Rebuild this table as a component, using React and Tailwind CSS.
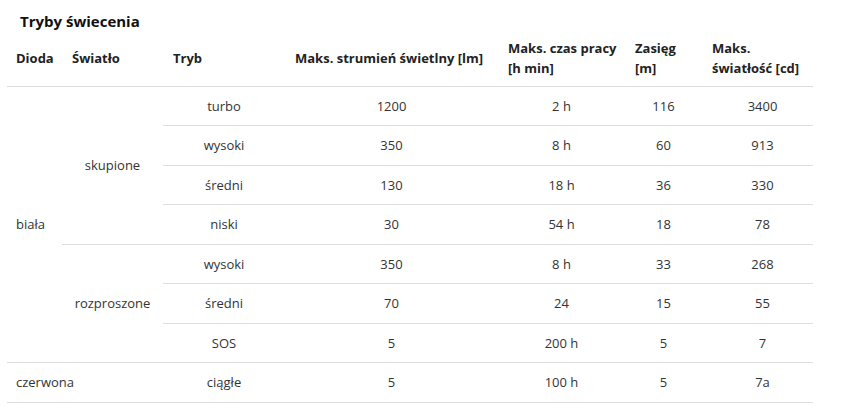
const rows = [
  { tryb: 'turbo', lm: '1200', time: '2 h', range: '116', cd: '3400' },
  { tryb: 'wysoki', lm: '350', time: '8 h', range: '60', cd: '913' },
  { tryb: 'średni', lm: '130', time: '18 h', range: '36', cd: '330' },
  { tryb: 'niski', lm: '30', time: '54 h', range: '18', cd: '78' },
  { tryb: 'wysoki', lm: '350', time: '8 h', range: '33', cd: '268' },
  { tryb: 'średni', lm: '70', time: '24', range: '15', cd: '55' },
  { tryb: 'SOS', lm: '5', time: '200 h', range: '5', cd: '7' },
];

const td = 'border-b border-[#dedede] text-center align-middle px-[10px]';

const App = () => {
  return (
    <div className="bg-white w-[843px] h-[413px] overflow-hidden pl-[7px] text-[#333] font-['Open_Sans',sans-serif]">
      <h2 className="ml-[13px] pt-[11px] text-[15px] leading-[20px] font-bold text-[#111]">
        Tryby świecenia
      </h2>

      <table className="border-collapse table-fixed w-[806px] text-[13px] leading-[20px]">
        <colgroup>
          <col className="w-[55px]" />
          <col className="w-[101px]" />
          <col className="w-[122px]" />
          <col className="w-[213px]" />
          <col className="w-[127px]" />
          <col className="w-[77px]" />
          <col className="w-[111px]" />
        </colgroup>
        <thead>
          <tr className="h-[55px] text-left font-bold text-[#222] whitespace-nowrap">
            <th className="border-b border-[#dedede] pl-[9px] align-middle">Dioda</th>
            <th className="border-b border-[#dedede] pl-[10px] align-middle">Światło</th>
            <th className="border-b border-[#dedede] pl-[10px] align-middle">Tryb</th>
            <th className="border-b border-[#dedede] pl-[10px] align-middle">Maks. strumień świetlny [lm]</th>
            <th className="border-b border-[#dedede] pl-[10px] align-middle">Maks. czas pracy<br />[h min]</th>
            <th className="border-b border-[#dedede] pl-[10px] align-middle">Zasięg<br />[m]</th>
            <th className="border-b border-[#dedede] pl-[10px] align-middle">Maks.<br />światłość [cd]</th>
          </tr>
        </thead>
        <tbody>
          {rows.map((r, i) => (
            <tr key={i} className={i % 2 === 0 ? 'h-[39px]' : 'h-[40px]'}>
              {i === 0 && (
                <td rowSpan={7} className="border-b border-[#dedede] pl-[9px] align-middle">
                  biała
                </td>
              )}
              {i === 0 && (
                <td rowSpan={4} className={td}>skupione</td>
              )}
              {i === 4 && (
                <td rowSpan={3} className={td}>rozproszone</td>
              )}
              <td className={td}>{r.tryb}</td>
              <td className={td}>{r.lm}</td>
              <td className={td}>{r.time}</td>
              <td className={td}>{r.range}</td>
              <td className="border-b border-[#dedede] text-center align-middle pl-[10px]">{r.cd}</td>
            </tr>
          ))}
          <tr className="h-[40px]">
            <td colSpan={2} className="border-b border-[#dedede] pl-[9px] align-middle">czerwona</td>
            <td className={td}>ciągłe</td>
            <td className={td}>5</td>
            <td className={td}>100 h</td>
            <td className={td}>5</td>
            <td className="border-b border-[#dedede] text-center align-middle pl-[10px]">7a</td>
          </tr>
        </tbody>
      </table>
    </div>
  );
};

export default App;
